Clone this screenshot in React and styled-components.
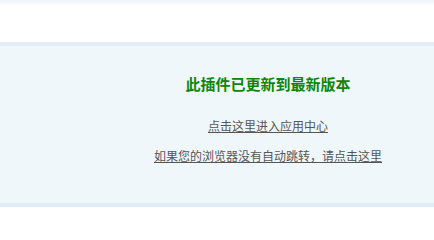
import React from 'react'
import styled, { createGlobalStyle } from 'styled-components'

const GlobalStyle = createGlobalStyle`
  html, body {
    margin: 0;
    padding: 0;
    background: #ffffff;
    font-family: "Liberation Sans", "Noto Sans CJK SC", sans-serif;
  }
`

const Page = styled.div`
  width: 434px;
  height: 240px;
  overflow: hidden;
  background: linear-gradient(to bottom, #eef4fa 0px, #ffffff 6px);
  padding-top: 42px;
  box-sizing: border-box;
`

const Notice = styled.div`
  box-sizing: border-box;
  height: 165px;
  background: #f0f7fb;
  border-top: 4px solid #e1edf7;
  border-bottom: 4px solid #e1edf7;
  padding: 28px 0 0 102px;
  text-align: center;
`

const Title = styled.h2`
  margin: 0 0 22px;
  font-size: 15px;
  line-height: 20px;
  font-weight: bold;
  color: #0a870a;
  font-family: "Noto Sans CJK SC", sans-serif;
`

const Line = styled.p`
  margin: 0 0 ${(p) => p.gap || 0}px;
  font-size: 12px;
  line-height: 20px;
  font-family: "Noto Sans CJK SC", sans-serif;
`

const Link = styled.a`
  color: #555555;
  text-decoration: underline;
`

export default function App() {
  return (
    <>
      <GlobalStyle />
      <Page>
        <Notice>
          <Title>此插件已更新到最新版本</Title>
          <Line gap={10}>
            <Link href="#">点击这里进入应用中心</Link>
          </Line>
          <Line>
            <Link href="#">如果您的浏览器没有自动跳转，请点击这里</Link>
          </Line>
        </Notice>
      </Page>
    </>
  )
}
